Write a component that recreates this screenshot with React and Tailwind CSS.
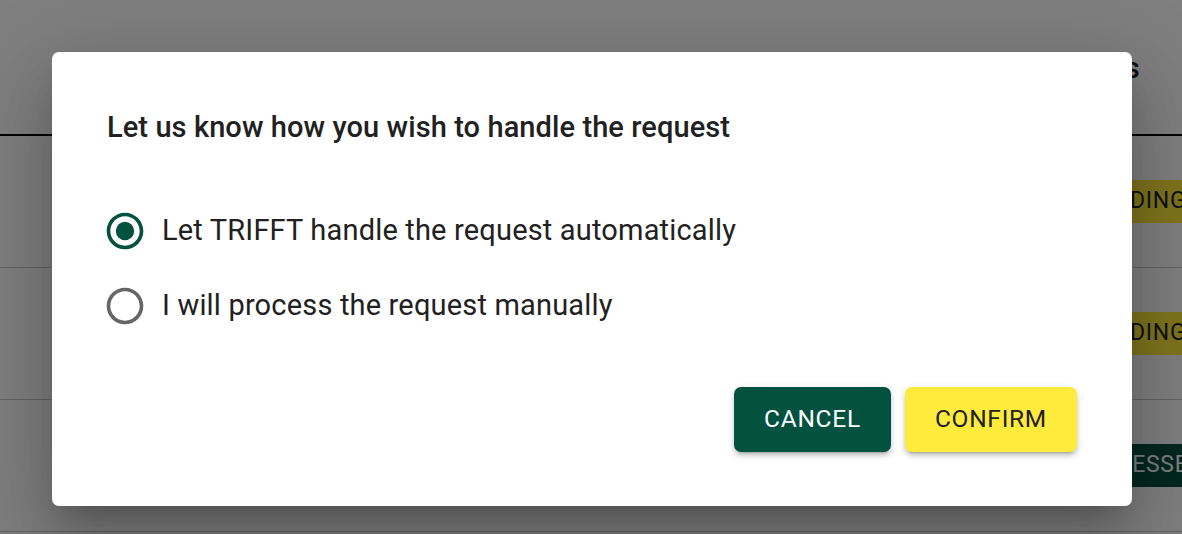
import React from "react";

function RadioIcon({ checked }) {
  return (
    <svg width="44" height="44" viewBox="0 0 24 24" className="shrink-0">
      {checked ? (
        <>
          <path
            fill="#03513f"
            d="M12 2C6.48 2 2 6.48 2 12s4.48 10 10 10 10-4.48 10-10S17.52 2 12 2zm0 18c-4.42 0-8-3.58-8-8s3.58-8 8-8 8 3.58 8 8-3.58 8-8 8z"
          />
          <circle cx="12" cy="12" r="5" fill="#03513f" />
        </>
      ) : (
        <path
          fill="#666666"
          d="M12 2C6.48 2 2 6.48 2 12s4.48 10 10 10 10-4.48 10-10S17.52 2 12 2zm0 18c-4.42 0-8-3.58-8-8s3.58-8 8-8 8 3.58 8 8-3.58 8-8 8z"
        />
      )}
    </svg>
  );
}

function Row({ children }) {
  return (
    <div className="flex h-[132px] border-b border-[#c8c8c8]">
      <div className="w-[1056px] shrink-0" />
      <div className="flex w-[220px] shrink-0 items-center">{children}</div>
    </div>
  );
}

export default function App() {
  return (
    <div className="relative h-[534px] w-[1182px] overflow-hidden bg-white font-['Roboto',sans-serif] text-[#212121]">
      {/* background page */}
      <div className="flex w-[1276px] flex-col">
        <div className="flex h-[136px] border-b-2 border-black">
          <div className="w-[1056px] shrink-0" />
          <div className="flex items-center pt-[4px] text-[29px] font-medium">Status</div>
        </div>
        <Row>
          <span className="ml-[14px] flex h-[43px] items-center bg-[#ffeb3b] px-[14px] text-[23px] tracking-[0.03em] text-[#212121]">
            PENDING
          </span>
        </Row>
        <Row>
          <span className="ml-[14px] flex h-[43px] items-center bg-[#ffeb3b] px-[14px] text-[23px] tracking-[0.03em] text-[#212121]">
            PENDING
          </span>
        </Row>
        <Row>
          <span className="ml-[0px] flex h-[43px] items-center bg-[#03513f] px-[14px] text-[23px] tracking-[0.03em] text-white">
            PROCESSED
          </span>
        </Row>
      </div>

      {/* backdrop */}
      <div className="absolute inset-0 bg-black/50" />

      {/* dialog */}
      <div className="absolute inset-0 pl-[52px] pt-[52px]">
        <div className="flex h-[454px] w-[1080px] flex-col rounded-[7px] bg-white px-[55px] pb-[54px] pt-[52px] shadow-[0_20px_27px_-13px_rgba(0,0,0,0.2),0_44px_70px_5px_rgba(0,0,0,0.14),0_16px_84px_15px_rgba(0,0,0,0.12)]">
          <h2 className="text-[29px] font-medium leading-[1.6] tracking-[0.003em] text-[#212121]">
            Let us know how you wish to handle the request
          </h2>
          <div className="mt-[43px] flex flex-col">
            <label className="flex h-[75px] items-center gap-[15px] -ml-[4px]">
              <RadioIcon checked />
              <span className="text-[29px] tracking-[0.006em]">Let TRIFFT handle the request automatically</span>
            </label>
            <label className="flex h-[75px] items-center gap-[15px] -ml-[4px]">
              <RadioIcon />
              <span className="text-[29px] tracking-[0.006em]">I will process the request manually</span>
            </label>
          </div>
          <div className="mt-auto flex justify-end gap-[14px]">
            <button className="flex h-[65px] items-center rounded-[7px] bg-[#03513f] px-[30px] text-[24.5px] tracking-[0.03em] text-white shadow-[0_5px_2px_-4px_rgba(0,0,0,0.2),0_4px_4px_0_rgba(0,0,0,0.14),0_2px_9px_0_rgba(0,0,0,0.12)]">
              CANCEL
            </button>
            <button className="flex h-[65px] items-center rounded-[7px] bg-[#ffeb3b] px-[30px] text-[24.5px] tracking-[0.03em] text-[#212121] shadow-[0_5px_2px_-4px_rgba(0,0,0,0.2),0_4px_4px_0_rgba(0,0,0,0.14),0_2px_9px_0_rgba(0,0,0,0.12)]">
              CONFIRM
            </button>
          </div>
        </div>
      </div>
    </div>
  );
}
